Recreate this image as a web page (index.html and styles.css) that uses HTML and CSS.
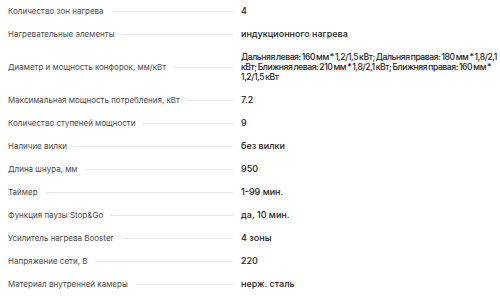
FILE: index.html
```html
<!DOCTYPE html>
<html lang="ru">
<head>
<meta charset="utf-8">
<link rel="stylesheet" href="styles.css">
</head>
<body>
<div class="specs">
  <div class="row"><div class="name"><span>Количество зон нагрева</span><i class="line"></i></div><div class="val">4</div></div>
  <div class="row"><div class="name"><span>Нагревательные элементы</span><i class="line"></i></div><div class="val">индукционного нагрева</div></div>
  <div class="row"><div class="name"><span>Диаметр и мощность конфорок, мм/кВт</span><i class="line"></i></div><div class="val val-long">Дальняя левая: 160 мм * 1,2/1,5 кВт; Дальняя правая: 180 мм * 1,8/2,1 кВт; Ближняя левая: 210 мм * 1,8/2,1 кВт; Ближняя правая: 160 мм * 1,2/1,5 кВт</div></div>
  <div class="row"><div class="name"><span>Максимальная мощность потребления, кВт</span><i class="line"></i></div><div class="val">7.2</div></div>
  <div class="row"><div class="name"><span>Количество ступеней мощности</span><i class="line"></i></div><div class="val">9</div></div>
  <div class="row"><div class="name"><span>Наличие вилки</span><i class="line"></i></div><div class="val">без вилки</div></div>
  <div class="row"><div class="name"><span>Длина шнура, мм</span><i class="line"></i></div><div class="val">950</div></div>
  <div class="row"><div class="name"><span>Таймер</span><i class="line"></i></div><div class="val">1-99 мин.</div></div>
  <div class="row"><div class="name"><span>Функция паузы Stop&amp;Go</span><i class="line"></i></div><div class="val">да, 10 мин.</div></div>
  <div class="row"><div class="name"><span>Усилитель нагрева Booster</span><i class="line"></i></div><div class="val">4 зоны</div></div>
  <div class="row"><div class="name"><span>Напряжение сети, В</span><i class="line"></i></div><div class="val">220</div></div>
  <div class="row"><div class="name"><span>Материал внутренней камеры</span><i class="line"></i></div><div class="val">нерж. сталь</div></div>
</div>
</body>
</html>
```
FILE: styles.css
```css
html, body {
  margin: 0;
  padding: 0;
  background: #fff;
}
body {
  font-family: Inter, "Noto Sans", sans-serif;
  overflow: hidden;
}
.specs {
  display: flex;
  flex-direction: column;
  padding-left: 8px;
  width: 492px;
}
.row {
  display: flex;
  align-items: center;
  padding: 6px 0;
}
.name {
  flex: 0 0 225px;
  display: flex;
  align-items: center;
  font-size: 8px;
  line-height: 11px;
  color: #4a4a4a;
  white-space: nowrap;
}
.line {
  flex: 1;
  height: 1px;
  background: #e6e6e6;
  margin-left: 8px;
}
.val {
  width: 258px;
  margin-left: 8px;
  flex: none;
  font-size: 9px;
  line-height: 10.2px;
  font-weight: 500;
  color: #222;
}
.val-long {
  width: 260px;
  font-size: 8.6px;
  letter-spacing: -0.42px;
  word-spacing: -0.8px;
}
```
